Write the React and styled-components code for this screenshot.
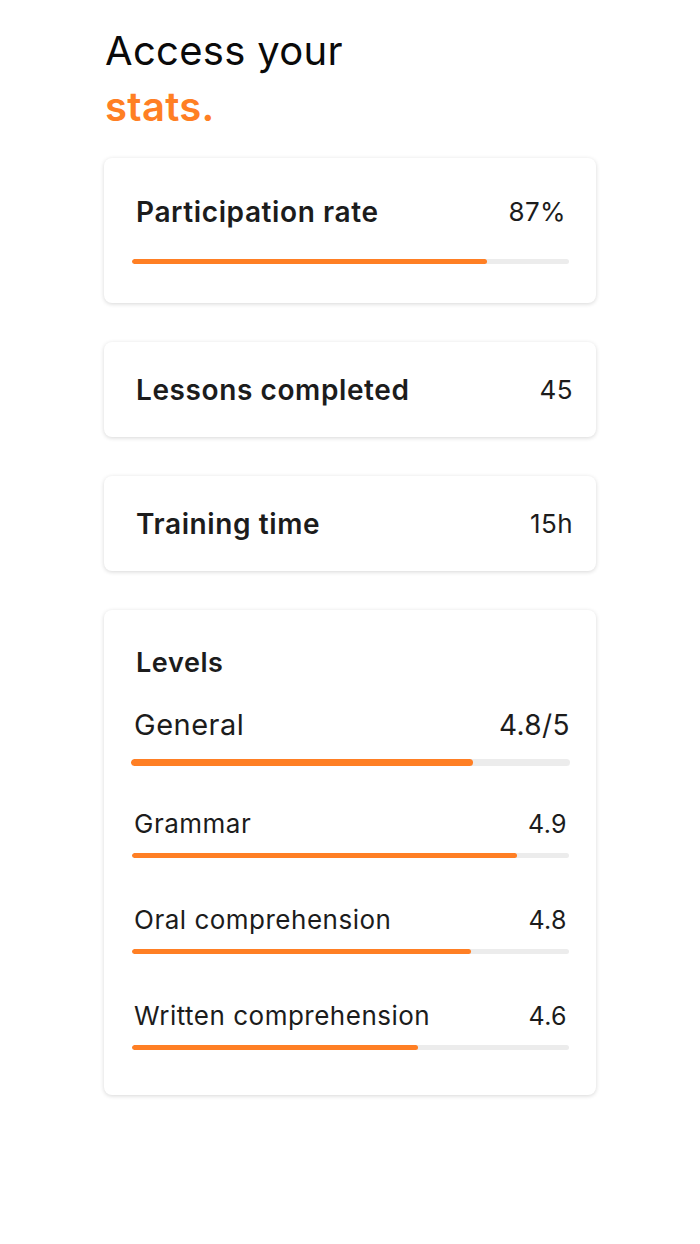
import React from "react";
import styled, { createGlobalStyle } from "styled-components";

const GlobalStyle = createGlobalStyle`
    body {
        margin: 0;
        background: #ffffff;
        font-family: 'Inter', 'Open Sans', 'Liberation Sans', sans-serif;
        color: #1c1c1c;
    }
`;

const Page = styled.div`
    width: 492px;
    margin: 0 auto;
    padding: 23px 0 140px 0;
    display: flex;
    flex-direction: column;
    gap: 39px;
`;

const Heading = styled.h1`
    margin: 0 0 -16px 1px;
    font-size: 40px;
    font-weight: 400;
    line-height: 56px;
    color: #0a0a0a;
    letter-spacing: 0.3px;
`;

const Accent = styled.span`
    display: block;
    color: #ff7f24;
    font-weight: 600;
`;

const Card = styled.div`
    background: #fff;
    border-radius: 8px;
    box-shadow: 0 1px 4px rgba(0, 0, 0, 0.16);
    padding: ${(p) => p.pad || "0 23px 0 32px"};
    height: ${(p) => p.height || "auto"};
    box-sizing: border-box;
    display: flex;
    flex-direction: column;
    justify-content: ${(p) => (p.center ? "center" : "flex-start")};
`;

const Row = styled.div`
    display: flex;
    justify-content: space-between;
    align-items: center;
    flex-shrink: 0;
    padding: ${(p) => p.pad || "0"};
`;

const Label = styled.span`
    font-size: ${(p) => p.size || "28px"};
    font-weight: ${(p) => p.weight || 600};
    line-height: 36px;
    letter-spacing: ${(p) => p.ls || "0.6px"};
    color: #1c1c1c;
`;

const Value = styled.span`
    font-size: ${(p) => p.size || "26px"};
    font-weight: 400;
    line-height: 36px;
    letter-spacing: 0.4px;
    color: #1c1c1c;
`;

const Track = styled.div`
    flex-shrink: 0;
    height: ${(p) => p.h || 5}px;
    border-radius: 4px;
    background: #ececec;
    margin: ${(p) => p.margin || "0"};
    overflow: hidden;
`;

const Fill = styled.div`
    height: 100%;
    border-radius: 4px;
    background: #ff7f24;
`;

const Bar = ({ pct, h, margin }) => (
    <Track h={h} margin={margin}>
        <Fill style={{ width: `${pct}%` }} />
    </Track>
);

const levels = [
    { name: "Grammar", value: "4.9", pct: 88 },
    { name: "Oral comprehension", value: "4.8", pct: 77.6 },
    { name: "Written comprehension", value: "4.6", pct: 65.4 },
];

const LevelItem = styled.div`
    display: flex;
    flex-direction: column;
    flex-shrink: 0;
    margin-top: ${(p) => p.top || "0"};
`;

export default function App() {
    return (
        <>
            <GlobalStyle />
            <Page>
                <Heading>
                    Access your
                    <Accent>stats.</Accent>
                </Heading>

                <Card height="145px" pad="36px 27px 0 28px">
                    <Row pad="0 3px 0 4px">
                        <Label>Participation rate</Label>
                        <Value>87%</Value>
                    </Row>
                    <Bar pct={81.2} margin="29px 0 0 0" />
                </Card>

                <Card height="95px" center>
                    <Row>
                        <Label>Lessons completed</Label>
                        <Value>45</Value>
                    </Row>
                </Card>

                <Card height="95px" center>
                    <Row>
                        <Label>Training time</Label>
                        <Value>15h</Value>
                    </Row>
                </Card>

                <Card height="485px" pad="35px 26px 0 27px">
                    <Row pad="0 0 0 5px">
                        <Label size="27px">Levels</Label>
                    </Row>
                    <Row pad="0 0 0 3px" style={{ marginTop: 26 }}>
                        <Label size="29px" weight={400} ls="0.5px">General</Label>
                        <Value size="28px">4.8/5</Value>
                    </Row>
                    <Bar pct={78} h={7} margin="16px 0 0 0" />
                    {levels.map((l, i) => (
                        <LevelItem key={l.name} top={i === 0 ? "40px" : "44px"}>
                            <Row pad="0 3px 0 3px">
                                <Label size="26px" weight={400} ls="0.5px">{l.name}</Label>
                                <Value size="25px">{l.value}</Value>
                            </Row>
                            <Bar pct={l.pct} margin="11px 1px 0 1px" />
                        </LevelItem>
                    ))}
                </Card>
            </Page>
        </>
    );
}
